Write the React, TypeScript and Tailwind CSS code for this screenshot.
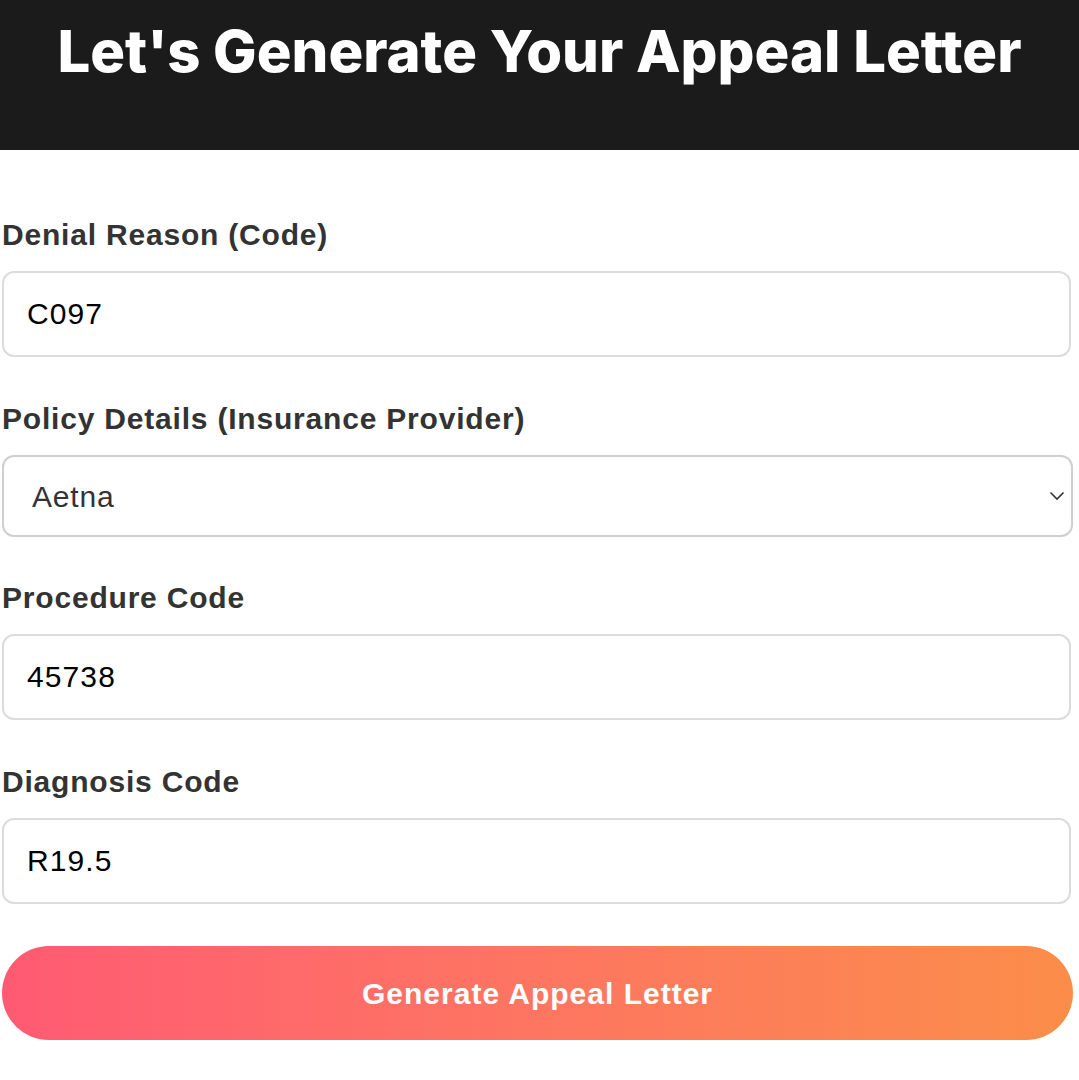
import { useState } from 'react';

const labelCls = "block text-[30px] leading-[32px] font-bold tracking-[0.8px] text-[#333] mb-5";
const inputCls =
  "w-[calc(100%-2px)] h-[86px] rounded-xl border-2 border-[#dcdcdc] bg-white px-[23px] text-[30px] tracking-[1.1px] text-black outline-none";

export default function App() {
  const [denial, setDenial] = useState('C097');
  const [provider, setProvider] = useState('Aetna');
  const [procedure, setProcedure] = useState('45738');
  const [diagnosis, setDiagnosis] = useState('R19.5');

  return (
    <div className="min-h-screen bg-white" style={{ fontFamily: '"Liberation Sans", Arial, sans-serif' }}>
      <header className="h-[150px] bg-[#1b1b1b] flex justify-center pt-[22px]">
        <h1 className="font-['Inter',sans-serif] text-[58px] leading-none font-extrabold text-white">
          Let's Generate Your Appeal Letter
        </h1>
      </header>

      <form className="pl-[2px] pr-[6px] pt-[69px] pb-10" onSubmit={(e) => e.preventDefault()}>
        <div className="mb-[46px]">
          <label className={labelCls}>Denial Reason (Code)</label>
          <input className={inputCls} value={denial} onChange={(e) => setDenial(e.target.value)} />
        </div>

        <div className="mb-[45px]">
          <label className={labelCls}>Policy Details (Insurance Provider)</label>
          <div className="relative">
            <select
              className="w-full h-[82px] appearance-none rounded-xl border-2 border-[#cfcfcf] bg-white pl-[28px] text-[30px] tracking-[0.8px] text-[#333] outline-none"
              value={provider}
              onChange={(e) => setProvider(e.target.value)}
            >
              <option>Aetna</option>
              <option>Blue Cross Blue Shield</option>
              <option>Cigna</option>
              <option>UnitedHealthcare</option>
            </select>
            <svg
              className="pointer-events-none absolute right-[8px] top-1/2 -translate-y-1/2 w-[16px] h-[10px] text-[#333]"
              viewBox="0 0 16 10"
              fill="none"
              stroke="currentColor"
              strokeWidth={1.6}
            >
              <path d="M1.5 1.5 L8 8 L14.5 1.5" />
            </svg>
          </div>
        </div>

        <div className="mb-[46px]">
          <label className={labelCls}>Procedure Code</label>
          <input className={inputCls} value={procedure} onChange={(e) => setProcedure(e.target.value)} />
        </div>

        <div className="mb-[42px]">
          <label className={labelCls}>Diagnosis Code</label>
          <input className={inputCls} value={diagnosis} onChange={(e) => setDiagnosis(e.target.value)} />
        </div>

        <button
          type="submit"
          className="w-full h-[94px] rounded-full bg-gradient-to-r from-[#ff5a73] to-[#fb8d48] text-white text-[30px] tracking-[1px] font-bold"
        >
          Generate Appeal Letter
        </button>
      </form>
    </div>
  );
}
